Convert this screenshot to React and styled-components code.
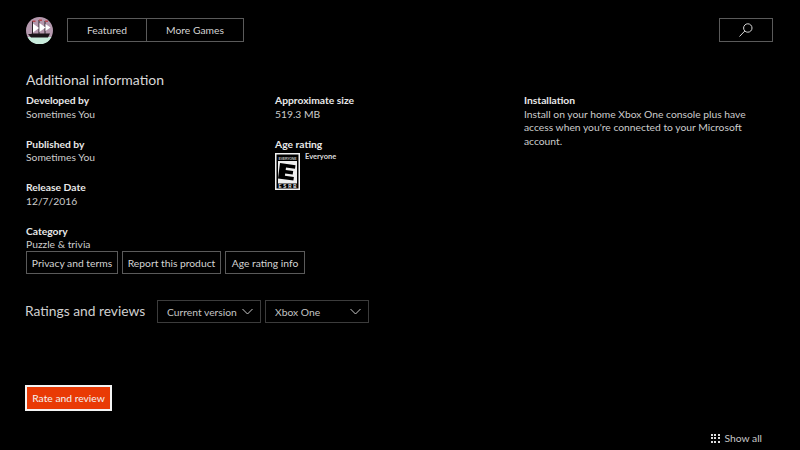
import React from "react";
import styled, { createGlobalStyle } from "styled-components";

const GlobalStyle = createGlobalStyle`
  html, body {
    margin: 0;
    background: #000;
  }
  * {
    box-sizing: border-box;
  }
`;

const Page = styled.div`
  width: 800px;
  height: 450px;
  overflow: hidden;
  background: #000;
  color: #e6e6e6;
  font-family: "Lato", "Open Sans", sans-serif;
  font-size: 10.3px;
  display: flex;
  flex-direction: column;
  padding: 17px 27px 0 26px;
`;

const Header = styled.div`
  display: flex;
  align-items: center;
  height: 26px;
`;

const Avatar = styled.svg`
  width: 27px;
  height: 27px;
  flex: none;
`;

const Tabs = styled.div`
  display: flex;
  margin-left: 14px;
  height: 24px;
  border: 1px solid #5a5a5a;
`;

const Tab = styled.div`
  width: ${(p) => p.$w}px;
  display: flex;
  align-items: center;
  justify-content: center;
  color: #d4d4d4;
  & + & {
    border-left: 1px solid #5a5a5a;
  }
`;

const SearchButton = styled.div`
  margin-left: auto;
  width: 54px;
  height: 24px;
  border: 1px solid #5a5a5a;
  display: flex;
  align-items: center;
  justify-content: center;
`;

const Heading = styled.div`
  margin-top: 27px;
  font-size: 14px;
  line-height: 20px;
  color: #d8d8d8;
`;

const Columns = styled.div`
  display: grid;
  grid-template-columns: 249px 249px 240px;
  margin-top: 4px;
  height: 157px;
`;

const Column = styled.div`
  display: flex;
  flex-direction: column;
  gap: 16.5px;
`;

const Item = styled.div`
  line-height: 13.5px;
`;

const Label = styled.div`
  font-weight: 700;
  color: #e8e8e8;
`;

const Value = styled.div`
  color: #cccccc;
`;

const RatingRow = styled.div`
  display: flex;
  gap: 5px;
  margin-top: 2px;
`;

const RatingText = styled.div`
  font-size: 7.5px;
  font-weight: 700;
  color: #ddd;
  line-height: 8px;
`;

const Esrb = styled.svg`
  width: 25px;
  height: 37px;
`;

const LinkRow = styled.div`
  display: flex;
  gap: 4px;
`;

const LinkButton = styled.div`
  height: 23px;
  width: ${(p) => p.$w}px;
  border: 1px solid #5a5a5a;
  display: flex;
  align-items: center;
  justify-content: center;
  color: #d4d4d4;
`;

const ReviewBar = styled.div`
  display: flex;
  align-items: center;
  margin-top: 26px;
  height: 23px;
`;

const ReviewTitle = styled.div`
  width: 131px;
  margin-left: -1px;
  margin-right: 1px;
  margin-top: -3px;
  font-size: 13.8px;
  color: #d0d0d0;
`;

const Dropdown = styled.div`
  width: 104px;
  height: 23px;
  margin-right: 4px;
  border: 1px solid #3c3c3c;
  display: flex;
  align-items: center;
  justify-content: space-between;
  padding: 0 7px 0 9px;
  color: #c4c4c4;
  white-space: nowrap;
`;

const Chevron = styled.svg`
  width: 11px;
  height: 7px;
  flex: none;
`;

const RateButton = styled.div`
  margin-top: 62px;
  margin-left: -1px;
  width: 87px;
  height: 26px;
  background: #e93a05;
  border: 2px solid #f4f4f4;
  display: flex;
  align-items: center;
  justify-content: center;
  color: #f3f3f3;
`;

const ShowAll = styled.div`
  margin-top: 20px;
  margin-right: 11px;
  display: flex;
  align-items: center;
  justify-content: flex-end;
  gap: 5px;
  color: #c8c8c8;
  height: 14px;
`;

const Dots = styled.div`
  display: grid;
  grid-template-columns: repeat(3, 2px);
  grid-auto-rows: 2px;
  gap: 1.5px;
`;

const Dot = styled.i`
  display: block;
  background: #ddd;
`;

const ShipAvatar = () => (
  <Avatar viewBox="0 0 27 27">
    <circle cx="13.5" cy="13.5" r="13.5" fill="#b498ad" />
    <path d="M1.500 20h24A13.500 13.500 0 0 1 1.500 20z" fill="#c8ecdc" />
    <path d="M2 17l3 0 1-.5h18l-2 4H5z" fill="#1a1418" />
    <path d="M6.500 4v13M13 3v14M19 4v13" stroke="#2a2228" strokeWidth="1" />
    <path d="M7 6.500l6 4.500-6 4.500zM13.500 6l6 4.500-6 4.500zM19.500 7l5 3.500-5 3.500z" fill="#fff" />
    <path d="M6.500 3.500h3v1.500h-3zM13 2.500h3V4h-3zM19 3.500h3V5h-3z" fill="#b5474f" />
  </Avatar>
);

const SearchIcon = () => (
  <svg width="16" height="16" viewBox="0 0 16 16" fill="none" stroke="#d8d8d8" strokeWidth="1">
    <circle cx="9.800" cy="6" r="4.200" />
    <path d="M6.800 9L1.500 14.500" />
  </svg>
);

const EsrbIcon = () => (
  <Esrb viewBox="0 0 25 37">
    <rect width="25" height="37" fill="#f0f0f0" />
    <rect x="1.500" y="1.500" width="22" height="34" fill="#000" />
    <text x="12.500" y="6.500" fontSize="3.500" fontWeight="700" fill="#bbb" textAnchor="middle" textLength="18" fontFamily="Liberation Sans, sans-serif">EVERYONE</text>
    <rect x="3" y="8" width="19" height="22.500" fill="#f0f0f0" />
    <path d="M5 10l15.500 2.200-.5 3.600-9-1.200-.3 2.400 7.500 1-.5 3.400-7.500-1-.3 2.400 9 1.200-.5 3.600L3 25.500z" fill="#000" />
    <text x="12.500" y="35" fontSize="4.500" fontWeight="700" fill="#f0f0f0" textAnchor="middle" textLength="18" fontFamily="Liberation Sans, sans-serif">ESRB</text>
  </Esrb>
);

const ChevronIcon = () => (
  <Chevron viewBox="0 0 11 7" fill="none" stroke="#c8c8c8" strokeWidth="1">
    <path d="M.5 1l5 5 5-5" />
  </Chevron>
);

const leftItems = [
  ["Developed by", "Sometimes You"],
  ["Published by", "Sometimes You"],
  ["Release Date", "12/7/2016"],
  ["Category", "Puzzle & trivia"],
];

const App = () => (
  <Page>
    <GlobalStyle />
    <Header>
      <ShipAvatar />
      <Tabs>
        <Tab $w={78}>Featured</Tab>
        <Tab $w={97}>More Games</Tab>
      </Tabs>
      <SearchButton>
        <SearchIcon />
      </SearchButton>
    </Header>

    <Heading>Additional information</Heading>

    <Columns>
      <Column>
        {leftItems.map(([label, value]) => (
          <Item key={label}>
            <Label>{label}</Label>
            <Value>{value}</Value>
          </Item>
        ))}
      </Column>
      <Column>
        <Item>
          <Label>Approximate size</Label>
          <Value>519.3 MB</Value>
        </Item>
        <Item>
          <Label>Age rating</Label>
          <RatingRow>
            <EsrbIcon />
            <RatingText>Everyone</RatingText>
          </RatingRow>
        </Item>
      </Column>
      <Column>
        <Item>
          <Label>Installation</Label>
          <Value>
            Install on your home Xbox One console plus have access when you're connected to your Microsoft account.
          </Value>
        </Item>
      </Column>
    </Columns>

    <LinkRow>
      <LinkButton $w={92}>Privacy and terms</LinkButton>
      <LinkButton $w={99}>Report this product</LinkButton>
      <LinkButton $w={80}>Age rating info</LinkButton>
    </LinkRow>

    <ReviewBar>
      <ReviewTitle>Ratings and reviews</ReviewTitle>
      <Dropdown>
        Current version
        <ChevronIcon />
      </Dropdown>
      <Dropdown>
        Xbox One
        <ChevronIcon />
      </Dropdown>
    </ReviewBar>

    <RateButton>Rate and review</RateButton>

    <ShowAll>
      <Dots>
        {Array.from({ length: 9 }, (_, i) => (
          <Dot key={i} />
        ))}
      </Dots>
      Show all
    </ShowAll>
  </Page>
);

export default App;
